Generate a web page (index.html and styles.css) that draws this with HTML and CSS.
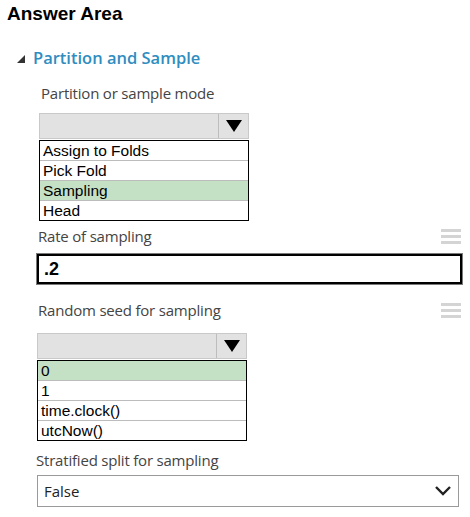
FILE: index.html
```html
<!DOCTYPE html>
<html lang="en">
<head>
    <meta charset="UTF-8">
    <meta name="viewport" content="width=device-width, initial-scale=1.0">
    <title>Answer Area</title>
    <link rel="stylesheet" href="styles.css">
</head>
<body>
    <h1 class="title">Answer Area</h1>

    <div class="section-head">
        <span class="caret"></span>
        <span>Partition and Sample</span>
    </div>

    <div class="panel">
        <div class="field-label first">Partition or sample mode</div>
        <div class="dropdown">
            <div class="dropdown-head">
                <span class="dropdown-blank"></span>
                <span class="dropdown-arrow"><span class="tri"></span></span>
            </div>
            <ul class="dropdown-list">
                <li>Assign to Folds</li>
                <li>Pick Fold</li>
                <li class="picked">Sampling</li>
                <li>Head</li>
            </ul>
        </div>

        <div class="field-row rate">
            <span class="field-label">Rate of sampling</span>
            <span class="grip"><i></i><i></i><i></i></span>
        </div>
        <div class="text-box">.2</div>

        <div class="field-row seed">
            <span class="field-label">Random seed for sampling</span>
            <span class="grip"><i></i><i></i><i></i></span>
        </div>
        <div class="dropdown second">
            <div class="dropdown-head">
                <span class="dropdown-blank"></span>
                <span class="dropdown-arrow"><span class="tri"></span></span>
            </div>
            <ul class="dropdown-list">
                <li class="picked">0</li>
                <li>1</li>
                <li>time.clock()</li>
                <li>utcNow()</li>
            </ul>
        </div>

        <div class="field-label strat">Stratified split for sampling</div>
        <div class="select-box">
            <span>False</span>
            <svg width="18" height="12" viewBox="0 0 18 12">
                <path d="M2 2 L9 9 L16 2" fill="none" stroke="#222" stroke-width="2.4"/>
            </svg>
        </div>
    </div>
</body>
</html>
```

FILE: styles.css
```css
body {
  margin: 0;
  padding: 0;
  background-color: #ffffff;
  font-family: "Open Sans", sans-serif;
  color: #444444;
}

.title {
  margin: 0;
  padding: 3px 7px 0;
  font-family: "Liberation Sans", Arial, sans-serif;
  font-size: 19px;
  font-weight: bold;
  line-height: 22px;
  color: #000000;
}

.section-head {
  display: flex;
  align-items: center;
  gap: 8px;
  margin-top: 21px;
  padding-left: 17px;
  font-size: 16.5px;
  font-weight: 600;
  line-height: 24px;
  color: #2f8dc0;
}

.caret {
  width: 0;
  height: 0;
  border-left: 8px solid transparent;
  border-bottom: 8px solid #333333;
  margin-top: 2px;
}

.panel {
  width: 426px;
  padding-left: 36px;
}

.field-label {
  font-size: 15px;
  line-height: 20px;
  color: #444444;
  letter-spacing: -0.2px;
}

.field-label.first {
  margin-top: 13px;
  padding-left: 5px;
}

.dropdown {
  width: 210px;
  margin-top: 10px;
  margin-left: 3px;
  font-family: "Liberation Sans", Arial, sans-serif;
  color: #000000;
}

.dropdown.second {
  margin-top: 13px;
  margin-left: 1px;
}

.dropdown-head {
  display: flex;
  height: 26px;
  box-sizing: border-box;
  border: 1px solid #c9c9c9;
  background-color: #e2e2e2;
}

.dropdown-blank {
  flex: 1;
}

.dropdown-arrow {
  width: 29px;
  border-left: 1px solid #bdbdbd;
  display: flex;
  align-items: center;
  justify-content: center;
}

.tri {
  width: 0;
  height: 0;
  border-left: 8px solid transparent;
  border-right: 8px solid transparent;
  border-top: 12px solid #000000;
}

.dropdown-list {
  list-style: none;
  margin: 1px 0 0;
  padding: 0;
  border: 1px solid #000000;
  border-top: none;
}

.dropdown-list li {
  height: 19px;
  line-height: 19px;
  padding-left: 3px;
  font-size: 15.5px;
  border-top: 1px solid #bcbcbc;
}

.dropdown-list li:first-child {
  border-top: 1px solid #000000;
}

.dropdown-list li.picked {
  background-color: #c5e1c5;
}

.field-row {
  display: flex;
  justify-content: space-between;
  align-items: center;
  padding-left: 2px;
}

.field-row.rate {
  margin-top: 5px;
}

.field-row.seed {
  margin-top: 16px;
}

.grip {
  display: flex;
  flex-direction: column;
  gap: 3px;
  width: 20px;
  margin-right: 1px;
}

.grip i {
  display: block;
  height: 3px;
  background-color: #d4d4d4;
}

.text-box {
  height: 30px;
  box-sizing: border-box;
  margin-top: 8px;
  margin-left: 1px;
  border: 2px solid #000000;
  box-shadow: 0 0 0 1px #7a7a7a;
  padding-left: 5px;
  font-family: "Liberation Sans", Arial, sans-serif;
  font-weight: bold;
  font-size: 18px;
  line-height: 26px;
  color: #000000;
}

.field-label.strat {
  margin-top: 9px;
}

.select-box {
  display: flex;
  justify-content: space-between;
  align-items: center;
  height: 32px;
  width: 422px;
  box-sizing: border-box;
  margin-top: 5px;
  margin-left: 1px;
  border: 1px solid #9a9a9a;
  padding: 0 6px 0 6px;
  font-size: 15px;
  color: #222222;
}
```
